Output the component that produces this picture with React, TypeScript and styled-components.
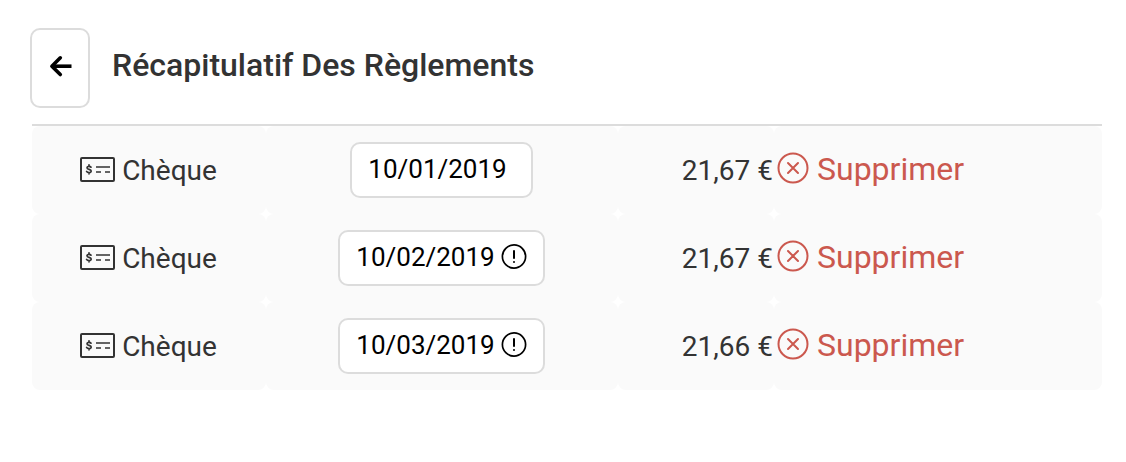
import React from "react";
import styled, { createGlobalStyle } from "styled-components";

const GlobalStyle = createGlobalStyle`
  * {
    box-sizing: border-box;
  }

  body {
    margin: 0;
    background: #ffffff;
    color: #333333;
    font-family: Roboto, "Liberation Sans", sans-serif;
  }

  button {
    font-family: inherit;
  }
`;

const Page = styled.main`
  padding: 28px 24px 24px 32px;
`;

const Header = styled.header`
  display: flex;
  align-items: flex-start;
  gap: 22px;
  padding-bottom: 16px;
  border-bottom: 2px solid #dcdcdc;
`;

const OutlineButton = styled.button`
  display: inline-flex;
  align-items: center;
  background: #ffffff;
  border: 2px solid #dcdcdc;
  border-radius: 10px;
  color: #000000;
  cursor: pointer;
`;

const BackButton = styled(OutlineButton)`
  justify-content: center;
  width: 60px;
  height: 80px;
  margin-left: -2px;
  padding: 0;
`;

const Title = styled.h1`
  margin: 0;
  font-size: 32px;
  line-height: 74px;
  font-weight: 500;
`;

const Table = styled.table`
  width: 100%;
  table-layout: fixed;
  border-collapse: separate;
  border-spacing: 0;
`;

const Column = styled.col<{ $width?: number }>`
  width: ${({ $width }) => ($width ? `${$width}px` : "auto")};
`;

const Cell = styled.td<{ $align: "left" | "center" | "right" }>`
  height: 88px;
  padding: 0 1px 0 0;
  background: #fafafa;
  border-radius: 8px;
  text-align: ${({ $align }) => $align};
  font-size: 28px;
  line-height: 32px;
  white-space: nowrap;
`;

const TextCell = styled(Cell)`
  padding-top: 2px;
`;

const Method = styled.span`
  display: flex;
  align-items: center;
  justify-content: center;
  gap: 6px;
  height: 32px;
`;

const DateButton = styled(OutlineButton)<{ $flagged: boolean }>`
  height: 56px;
  padding: 0 ${({ $flagged }) => ($flagged ? 16 : 24)}px 2px 16px;
  gap: 6px;
  vertical-align: middle;
  font-size: 26px;
  line-height: 32px;
`;

const DeleteButton = styled.button`
  display: inline-flex;
  align-items: center;
  gap: 8px;
  padding: 0 0 2px 3px;
  border: 0;
  background: none;
  color: #cb584e;
  font-size: 32px;
  line-height: 40px;
  vertical-align: middle;
  cursor: pointer;
`;

const Icon = styled.svg`
  display: block;
  flex: none;
  fill: none;
  stroke: currentColor;
  stroke-linecap: round;
  stroke-linejoin: round;
`;

const ArrowLeftIcon = () => (
  <Icon width="26" height="26" viewBox="0 0 26 26" strokeWidth="3.600" aria-hidden="true">
    <path d="M24.500 11.200H5" strokeLinecap="butt" />
    <path d="M13.300 2.800L4.900 11.200l8.400 8.400" />
  </Icon>
);

const ChequeIcon = () => (
  <Icon width="36" height="28" viewBox="0 0 36 28" strokeWidth="2" aria-hidden="true">
    <rect x="1" y="1" width="33" height="23" rx="1" />
    <path
      d="M11 10.200C10.300 9 7 8.800 7 10.800S11.200 12 11.200 14.100 7.300 15.800 6.600 14.400M9 7.800v1M9 15.800v1"
      strokeWidth="1.700"
    />
    <path d="M16 10h14M16 15h5M25 15h5" strokeWidth="1.600" strokeLinecap="butt" />
  </Icon>
);

const WarningIcon = () => (
  <Icon width="26" height="26" viewBox="0 0 26 26" strokeWidth="2" aria-hidden="true">
    <circle cx="13" cy="12.500" r="11.600" strokeWidth="1.700" />
    <path d="M13 7v7" />
    <path d="M13 18v.1" />
  </Icon>
);

const RemoveCircle = styled(Icon)`
  margin-bottom: 2px;
`;

const RemoveIcon = () => (
  <RemoveCircle width="32" height="32" viewBox="0 0 32 32" strokeWidth="2" aria-hidden="true">
    <circle cx="16" cy="16" r="14.500" />
    <path d="M11 11l10 10M21 11L11 21" />
  </RemoveCircle>
);

interface Payment {
  date: string;
  amount: string;
  flagged: boolean;
}

const payments: Payment[] = [
  { date: "10/01/2019", amount: "21,67 €", flagged: false },
  { date: "10/02/2019", amount: "21,67 €", flagged: true },
  { date: "10/03/2019", amount: "21,66 €", flagged: true },
];

const PaymentRow = ({ date, amount, flagged }: Payment) => (
  <tr>
    <TextCell $align="center">
      <Method>
        <ChequeIcon />
        Chèque
      </Method>
    </TextCell>
    <Cell $align="center">
      <DateButton type="button" $flagged={flagged}>
        {date}
        {flagged && <WarningIcon />}
      </DateButton>
    </Cell>
    <TextCell $align="right">{amount}</TextCell>
    <Cell $align="left">
      <DeleteButton type="button">
        <RemoveIcon />
        Supprimer
      </DeleteButton>
    </Cell>
  </tr>
);

export default function App() {
  return (
    <>
      <GlobalStyle />
      <Page>
        <Header>
          <BackButton type="button" aria-label="Retour">
            <ArrowLeftIcon />
          </BackButton>
          <Title>Récapitulatif Des Règlements</Title>
        </Header>
        <Table>
          <colgroup>
            <Column $width={234} />
            <Column $width={352} />
            <Column $width={156} />
            <Column />
          </colgroup>
          <tbody>
            {payments.map((payment) => (
              <PaymentRow key={payment.date} {...payment} />
            ))}
          </tbody>
        </Table>
      </Page>
    </>
  );
}
